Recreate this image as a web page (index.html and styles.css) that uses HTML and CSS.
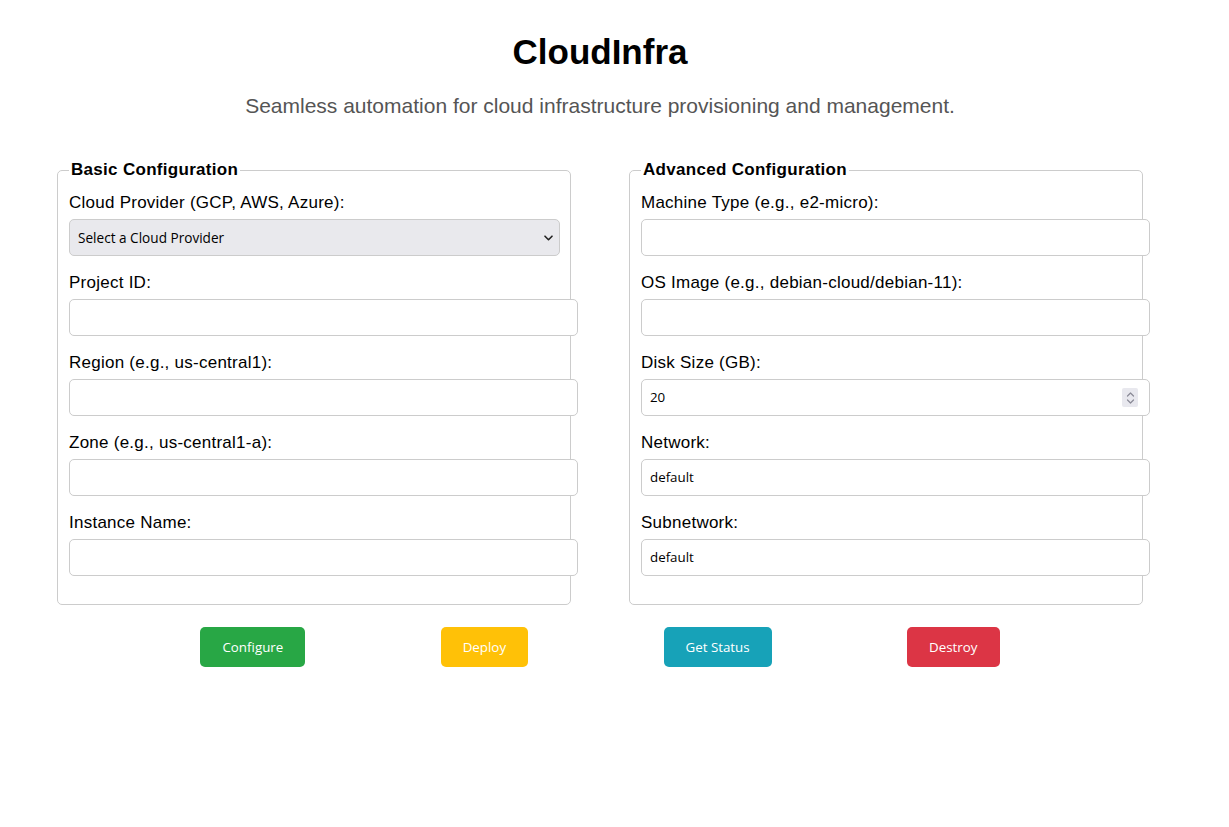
FILE: index.html
```html
<!DOCTYPE html>
<html lang="en">
<head>
<meta charset="utf-8">
<title>CloudInfra</title>
<link rel="stylesheet" href="styles.css">
</head>
<body>
<div class="page">
  <header class="hero">
    <h1 class="title">CloudInfra</h1>
    <p class="subtitle">Seamless automation for cloud infrastructure provisioning and management.</p>
  </header>

  <div class="panels">
    <fieldset class="panel">
      <legend class="panel-legend">Basic Configuration</legend>
      <div class="field">
        <label class="field-label" for="provider">Cloud Provider (GCP, AWS, Azure):</label>
        <div class="select-wrap">
          <select class="control select" id="provider">
            <option>Select a Cloud Provider</option>
            <option>GCP</option>
            <option>AWS</option>
            <option>Azure</option>
          </select>
          <svg class="select-chevron" width="9" height="6" viewBox="0 0 9 6"><path d="M1 1.2l3.5 3.5 3.5-3.5" fill="none" stroke="#222" stroke-width="1.6" stroke-linecap="round" stroke-linejoin="round"/></svg>
        </div>
      </div>
      <div class="field">
        <label class="field-label" for="project">Project ID:</label>
        <input class="control" id="project" type="text">
      </div>
      <div class="field">
        <label class="field-label" for="region">Region (e.g., us-central1):</label>
        <input class="control" id="region" type="text">
      </div>
      <div class="field">
        <label class="field-label" for="zone">Zone (e.g., us-central1-a):</label>
        <input class="control" id="zone" type="text">
      </div>
      <div class="field">
        <label class="field-label" for="instance">Instance Name:</label>
        <input class="control" id="instance" type="text">
      </div>
    </fieldset>

    <fieldset class="panel">
      <legend class="panel-legend">Advanced Configuration</legend>
      <div class="field">
        <label class="field-label" for="machine">Machine Type (e.g., e2-micro):</label>
        <input class="control" id="machine" type="text">
      </div>
      <div class="field">
        <label class="field-label" for="image">OS Image (e.g., debian-cloud/debian-11):</label>
        <input class="control" id="image" type="text">
      </div>
      <div class="field">
        <label class="field-label" for="disk">Disk Size (GB):</label>
        <div class="number-wrap">
          <input class="control" id="disk" type="number" value="20">
          <span class="spinner">
            <svg width="9" height="14" viewBox="0 0 9 14"><path d="M1.5 5l3-3 3 3M1.5 9l3 3 3-3" fill="none" stroke="#8a8a96" stroke-width="1.2" stroke-linecap="round" stroke-linejoin="round"/></svg>
          </span>
        </div>
      </div>
      <div class="field">
        <label class="field-label" for="network">Network:</label>
        <input class="control" id="network" type="text" value="default">
      </div>
      <div class="field">
        <label class="field-label" for="subnet">Subnetwork:</label>
        <input class="control" id="subnet" type="text" value="default">
      </div>
    </fieldset>
  </div>

  <div class="actions">
    <button class="btn btn-configure" type="button">Configure</button>
    <button class="btn btn-deploy" type="button">Deploy</button>
    <button class="btn btn-status" type="button">Get Status</button>
    <button class="btn btn-destroy" type="button">Destroy</button>
  </div>
</div>
</body>
</html>
```

FILE: styles.css
```css
html, body {
  margin: 0;
  padding: 0;
  background: #ffffff;
}

body {
  font-family: "Liberation Sans", Arial, sans-serif;
  color: #000;
}

.page {
  width: 1086px;
  padding: 32px 57px 40px;
}

.hero {
  text-align: center;
}

.title {
  margin: 0;
  font-size: 35px;
  line-height: 40px;
  font-weight: bold;
  color: #000;
}

.subtitle {
  margin: 22px 0 0;
  font-size: 21px;
  line-height: 24px;
  color: #555;
}

.panels {
  display: flex;
  gap: 58px;
  margin-top: 43px;
}

.panel {
  flex: 1;
  min-width: 0;
  margin: 0;
  padding: 15px 10px 10px 11px;
  border: 1px solid #ccc;
  border-radius: 5px;
}

.panel-legend {
  padding: 0 2px;
  font-size: 17px;
  line-height: 18px;
  letter-spacing: 0.3px;
  font-weight: bold;
}

.field {
  margin-bottom: 18px;
}

.field-label {
  display: block;
  margin-bottom: 7px;
  font-size: 17px;
  line-height: 18px;
  letter-spacing: 0.25px;
  color: #000;
}

.control {
  display: block;
  width: 100%;
  margin: 0;
  padding: 8px;
  border: 1px solid #ccc;
  border-radius: 5px;
  background: #fff;
  font-family: "Open Sans", "DejaVu Sans", sans-serif;
  font-size: 13.33px;
  line-height: 19px;
  color: #000;
  outline: none;
}

.select-wrap,
.number-wrap {
  position: relative;
}

.select {
  box-sizing: border-box;
  height: 37px;
  padding: 0 8px;
  background: #e9e9ed;
  font-size: 13.6px;
  -webkit-appearance: none;
  appearance: none;
}

.select-chevron {
  position: absolute;
  right: 7px;
  top: 16px;
  pointer-events: none;
}

input[type="number"] {
  -moz-appearance: textfield;
}

input[type="number"]::-webkit-inner-spin-button,
input[type="number"]::-webkit-outer-spin-button {
  -webkit-appearance: none;
  margin: 0;
}

.spinner {
  position: absolute;
  right: -6px;
  top: 9px;
  width: 16px;
  height: 19px;
  display: flex;
  align-items: center;
  justify-content: center;
  background: #e8e8ee;
  border-radius: 2px;
}

.actions {
  display: flex;
  justify-content: space-evenly;
  padding: 0 8px;
  margin-top: 22px;
}

.btn {
  height: 40px;
  padding: 0 22px;
  border: none;
  border-radius: 5px;
  font-family: "Open Sans", "DejaVu Sans", sans-serif;
  font-size: 13.33px;
  color: #fff;
  cursor: pointer;
}

.btn-configure { background: #28a745; }
.btn-deploy { background: #ffc107; }
.btn-status { background: #17a2b8; }
.btn-destroy { background: #dc3545; }
```
